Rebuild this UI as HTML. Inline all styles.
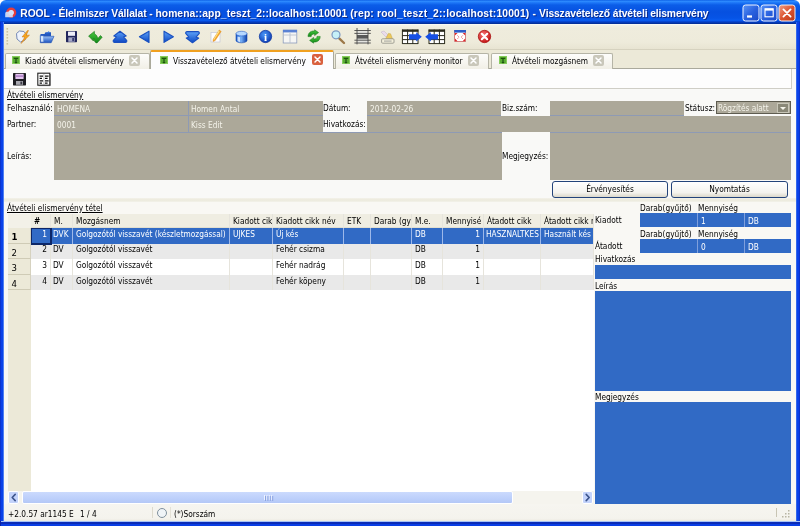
<!DOCTYPE html>
<html lang="hu"><head><meta charset="utf-8"><title>ROOL</title>
<style>
*{box-sizing:border-box;margin:0;padding:0}
html,body{width:800px;height:526px;overflow:hidden;background:#ece9d8}
body{position:relative;font-family:"DejaVu Sans Condensed","Liberation Sans",sans-serif;font-size:8.25px;color:#000;line-height:10px}
.a{position:absolute;white-space:nowrap}
.t{position:absolute;white-space:nowrap;height:10px;line-height:10px;filter:blur(0.3px)}
.g{position:absolute;background:#aca899}
.gt{color:#f4f3ea}
.b{position:absolute;background:#316ac5}
.w{color:#fff}
.u{text-decoration:underline}
#title{left:0;top:0;width:800px;height:23.5px;background:linear-gradient(180deg,#0a5ce4 0,#2f8dff 1.2px,#1e78f8 2.6px,#0b5de8 5px,#0650e0 12px,#0654e6 18px,#0a5cf0 20.4px,#0644d0 21.6px,#04309c 23.5px);border-radius:6px 6px 0 0}
#ttext{filter:blur(0.3px);left:20.3px;white-space:pre;top:7px;height:14px;line-height:14px;color:#fff;font-family:"Liberation Sans",sans-serif;font-weight:bold;font-size:10.3px;letter-spacing:0.01px;text-shadow:1px 1px 0 #0a2a8c}
.bl{position:absolute;background:#0a3edb}
#toolbar{left:3px;top:23.5px;width:794px;height:26px;background:linear-gradient(180deg,#fdfcf8 0,#f3f1e6 1.5px,#efecdd 4px,#eeebdb 18px,#e8e4d2 25px)}
.tab{position:absolute;top:53px;height:16px;background:linear-gradient(180deg,#fdfdfb,#f1efe6);border:1px solid #b5b4a6;border-bottom:none;border-radius:2px 2px 0 0}
.tab.on{top:50px;height:19px;background:#fcfcfe;border-color:#aaa99c;border-top:2px solid #f0a020}
.ti{position:absolute;width:8px;height:8px;background:#5cae34;border:1px solid #86cc5c}
.cx{position:absolute;width:11px;height:11px;background:#c9c7ba;border-radius:2px}
.cx.r{background:#d9613f}
.hd{position:absolute;top:215px;height:12px;background:#efede2;border-right:1px solid #d8d4c2}
.row{position:absolute;left:31px;width:563px;height:16px}
.vl{position:absolute;top:214px;width:1px;height:76px;background:#e6e4dc}
.rh{filter:blur(0.25px);position:absolute;left:8px;width:23px;height:15.5px;background:#ece9d8;border-bottom:1px solid #cfcbb6;border-right:1px solid #d6d2c0;font-size:9.5px;line-height:18px;padding-left:3.5px}
.btn{filter:blur(0.3px);position:absolute;top:181px;height:17px;border:1px solid #24447a;border-radius:3px;background:linear-gradient(180deg,#fff,#f4f3ee 70%,#dcd8ca);text-align:center;line-height:15px}
</style></head><body>
<!-- window frame -->
<div class="a" style="left:0;top:0;width:800px;height:8px;background:#fff"></div><div class="a" id="title"></div>
<div class="a" id="ttext"><span class="m" style="letter-spacing:-0.09px">ROOL - Élelmiszer Vállalat - </span><span class="m" style="letter-spacing:0.07px">homena::app_teszt_2::localhost:10001 </span><span class="m" style="letter-spacing:0.16px">(rep: rool_teszt_2::localhost:10001) - </span><span class="m" style="letter-spacing:-0.11px">Visszavételező átvételi elismervény</span></div>

<!-- title icon + window buttons -->
<svg class="a" style="left:0;top:0" width="800" height="24" viewBox="0 0 800 24">
<defs>
<linearGradient id="wb" x1="0" y1="0" x2="1" y2="1"><stop offset="0" stop-color="#5a94f6"/><stop offset=".5" stop-color="#2a62e0"/><stop offset="1" stop-color="#1a48c8"/></linearGradient>
<linearGradient id="wc" x1="0" y1="0" x2="1" y2="1"><stop offset="0" stop-color="#f0a088"/><stop offset=".5" stop-color="#dc5430"/><stop offset="1" stop-color="#b83818"/></linearGradient>
<filter id="sb2" x="-5%" y="-5%" width="110%" height="110%"><feGaussianBlur stdDeviation="0.35"/></filter>
</defs>
<g filter="url(#sb2)">
<circle cx="11.2" cy="12.6" r="3.9" fill="#e4ecfa" stroke="#e43c3c" stroke-width="2.4"/>
<path d="M5.2,13.4 q0,-1.6 1.6,-1.6 h2 q0.6,-1.6 2.2,-1.6 q1.8,0 1.8,2 v5 h-7.6z" fill="#cfe0fa" opacity=".92"/>
<rect x="743" y="5" width="16" height="16" rx="2.5" fill="url(#wb)" stroke="#f0f4ff" stroke-width="1"/>
<rect x="747" y="15.4" width="5" height="2.2" fill="#fff"/>
<rect x="761" y="5" width="16" height="16" rx="2.5" fill="url(#wb)" stroke="#f0f4ff" stroke-width="1"/>
<rect x="765" y="8.8" width="8.2" height="8" fill="none" stroke="#fff" stroke-width="1.1"/><rect x="765" y="8.6" width="8.2" height="2" fill="#fff"/>
<rect x="779" y="5" width="16" height="16" rx="2.5" fill="url(#wc)" stroke="#f8f0ec" stroke-width="1"/>
<path d="M783.4,9.4 L790.6,16.6 M790.6,9.4 L783.4,16.6" stroke="#fff" stroke-width="1.8" stroke-linecap="round"/>
</g>
</svg>
<div class="a" id="toolbar"></div>

<!-- toolbar icons -->
<svg class="a" style="left:0;top:0" width="800" height="70" viewBox="0 0 800 70">
<defs>
<linearGradient id="bg" x1="0" y1="0" x2="0" y2="1"><stop offset="0" stop-color="#5ea2f8"/><stop offset="1" stop-color="#0c48c4"/></linearGradient>
<linearGradient id="bh" x1="0" y1="0" x2="1" y2="0"><stop offset="0" stop-color="#1a58c8"/><stop offset=".45" stop-color="#7ab4fa"/><stop offset="1" stop-color="#0a3ea8"/></linearGradient>
<radialGradient id="bi" cx=".4" cy=".35" r=".7"><stop offset="0" stop-color="#4a98f8"/><stop offset="1" stop-color="#0a38b0"/></radialGradient>
<radialGradient id="rd" cx=".4" cy=".35" r=".7"><stop offset="0" stop-color="#f87878"/><stop offset="1" stop-color="#c00c0c"/></radialGradient>
<linearGradient id="gr" x1="0" y1="0" x2="0" y2="1"><stop offset="0" stop-color="#48c840"/><stop offset="1" stop-color="#148a18"/></linearGradient>
<linearGradient id="fl" x1="0" y1="0" x2="0" y2="1"><stop offset="0" stop-color="#a8ccfa"/><stop offset="1" stop-color="#1a52c0"/></linearGradient>
<filter id="sb" x="-5%" y="-5%" width="110%" height="110%"><feGaussianBlur stdDeviation="0.35"/></filter>
</defs>
<g filter="url(#sb)">
<!-- gripper -->
<g fill="#c9c3a4"><rect x="6.5" y="28" width="1.6" height="1.6"/><rect x="6.5" y="31" width="1.6" height="1.6"/><rect x="6.5" y="34" width="1.6" height="1.6"/><rect x="6.5" y="37" width="1.6" height="1.6"/><rect x="6.5" y="40" width="1.6" height="1.6"/><rect x="6.5" y="43" width="1.6" height="1.6"/></g>
<!-- 0 new -->
<path d="M16.5,33.5 L19.5,31 L24,31.5 L26.5,35 L25,40 L20.5,42 L17,39 Z" fill="#eef3fc" stroke="#7488b4" stroke-width="1"/>
<path d="M27.5,30.5 L22,37 L24.8,37 L21,43.5 L29.5,35.2 L26.2,35.2 L28.5,30.5Z" fill="#f7a51c" stroke="#c8741a" stroke-width=".5"/>
<!-- 1 open -->
<path d="M40.5,34 h4 l1,-1.8 h5.5 v3.8 h-10.5z" fill="#2458c0"/>
<path d="M46,33.5 l3,-2.5 l0.5,2 z" fill="#3a78e0"/>
<path d="M40.3,42.7 L40.3,35.5 L43,35.5 L44,36.3 L54,36.3 L51.2,42.7Z" fill="url(#fl)" stroke="#1c4cb0" stroke-width=".6"/>
<path d="M41,36.3 h2 l0.5,5.5 h-2.5z" fill="#e8f2ff" opacity=".85"/>
<!-- 2 save -->
<rect x="66" y="31" width="11" height="11.2" rx=".6" fill="#22265c"/>
<rect x="68" y="31.6" width="7" height="4.2" fill="#eeeef8"/>
<rect x="68.3" y="37.4" width="6.4" height="4.4" fill="#a6a8c6"/>
<rect x="72.3" y="38" width="1.6" height="3.2" fill="#2c3068"/>
<!-- 3 green arrow -->
<path d="M88.6,36 L94.4,31.4 L94.4,34 C96.6,34.6 97.4,36.8 97.8,38.6 L100.4,35.6 L102.2,37.2 L97,43 C94.6,42.8 94.2,40 93.8,38.4 L93.4,41 Z" fill="url(#gr)" stroke="#147018" stroke-width=".6" stroke-linejoin="round"/>
<!-- 4 double up -->
<g fill="url(#bg)" stroke="#1a50c0" stroke-width="1.1" stroke-linejoin="round">
<path d="M120,31.2 L126.2,36 L123.6,36.8 L126.8,40.6 Q127,42.4 125.4,42.4 L114.6,42.4 Q113,42.4 113.2,40.6 L116.4,36.8 L113.8,36 Z"/>
<!-- 5,6 -->
<path d="M139.4,36.8 L149,31.2 L149,42.4Z"/><path d="M173.4,36.8 L164,31.2 L164,42.4Z"/>
<!-- 7 double down -->
<path d="M192.5,42.8 L198.7,38 L196.1,37.2 L199.3,33.4 Q199.5,31.6 197.9,31.6 L187.1,31.6 Q185.5,31.6 185.7,33.4 L188.9,37.2 L186.3,38 Z"/>
</g>
<!-- 8 edit -->
<rect x="211" y="32.5" width="9" height="9.5" fill="#fdfdfd" stroke="#c4c6d8" stroke-width=".7"/>
<path d="M219.2,30 L221.2,31.4 L215.2,40.6 L213,41.6 L213.2,39.2Z" fill="#f6a62a" stroke="#d88418" stroke-width=".4"/>
<path d="M218.6,30.8 L219.6,31.4 L214.2,39.8 L213.4,39.4Z" fill="#fde48a"/>
<!-- 9 db -->
<path d="M236,33.6 v6.8 a5.5,2.4 0 0 0 11,0 v-6.8z" fill="url(#bh)" stroke="#1448b0" stroke-width=".6"/>
<ellipse cx="241.5" cy="33.6" rx="5.5" ry="2.3" fill="#b6d8ff" stroke="#2a62c8" stroke-width=".6"/>
<path d="M237.5,36.5 v4.5 q1.5,1 2.5,1 v-4.8z" fill="#e8f4ff" opacity=".8"/>
<!-- 10 info -->
<circle cx="265.5" cy="36.5" r="6.2" fill="url(#bi)" stroke="#0c349c" stroke-width=".7"/>
<text x="265.5" y="40.6" font-family="Liberation Serif,serif" font-weight="bold" font-size="11" fill="#fff" text-anchor="middle">i</text>
<!-- 11 window -->
<rect x="283.2" y="30.2" width="13.6" height="12.8" fill="#f6f6f4" stroke="#8c9cbc" stroke-width=".8"/>
<rect x="283" y="29.8" width="14" height="2.6" fill="#5a82d4"/>
<path d="M290,33 V43 M283.5,35 H296.5" stroke="#b4bccc" stroke-width=".8" fill="none"/>
<!-- 12 refresh -->
<g fill="url(#gr)" stroke="#147018" stroke-width=".5" stroke-linejoin="round">
<path d="M308,36.6 C308,32.8 311,30.6 314.6,31 L314.6,29.8 L318.6,32.6 L314.6,35.6 L314.6,34 C312.6,33.8 311.2,34.8 311.2,36.6Z"/>
<path d="M320.2,36.4 C320.2,40.2 317.2,42.4 313.6,42 L313.6,43.2 L309.6,40.4 L313.6,37.4 L313.6,39 C315.6,39.2 317,38.2 317,36.4Z"/>
</g>
<!-- 13 search -->
<path d="M339.2,38.4 L344,43" stroke="#9c7848" stroke-width="2.4" stroke-linecap="round"/>
<circle cx="336" cy="34.8" r="4" fill="#c6f0f8" stroke="#7c98c0" stroke-width="1.2"/>
<!-- 14 bars -->
<rect x="357" y="30.5" width="11" height="12.5" fill="#e4e4e0"/>
<rect x="357" y="35" width="11" height="3.6" fill="#585858"/>
<path d="M357,28 V44.4 M368,28 V44.4 M354.4,30.5 H370.8 M354.4,33.4 H370.8 M354.4,40.2 H370.8 M354.4,43 H370.8" stroke="#484848" stroke-width=".9" fill="none"/>
<!-- 15 stamp -->
<path d="M381,32 L384,31 L388,35 L386,37Z" fill="#eadcec" stroke="#b8a8c0" stroke-width=".4"/>
<path d="M385.6,39 L388.4,33.4 L390.6,33.8 L392.6,39Z" fill="#ecc85a" stroke="#b89838" stroke-width=".4"/>
<rect x="381.6" y="38.8" width="12.4" height="4.4" rx="1" fill="#f4f0dc" stroke="#8c8c84" stroke-width=".8"/>
<rect x="384" y="40.4" width="7.6" height="1.4" fill="#b8b8b0"/>
<!-- 16 export -->
<rect x="402.4" y="30" width="15.6" height="13.6" fill="#fff"/>
<path d="M402.4,30.6 H418 M402.4,35.6 H418 M402.4,39.6 H418 M402.4,43.6 H418 M402.4,29.6 V44 M407.6,29.6 V44 M412.8,29.6 V44 M418,29.6 V44" stroke="#2a2a1c" stroke-width="1" fill="none"/>
<rect x="402" y="29.4" width="16.4" height="2.4" fill="#2a2a1c"/>
<path d="M409,34.2 H416.2 V32.2 L421.8,36.8 L416.2,41.4 V39.4 H409Z" fill="#1650e4"/>
<!-- 17 import -->
<rect x="429" y="30" width="15.6" height="13.6" fill="#fff"/>
<path d="M429,30.6 H444.6 M429,35.6 H444.6 M429,39.6 H444.6 M429,43.6 H444.6 M429,29.6 V44 M434.2,29.6 V44 M439.4,29.6 V44 M444.6,29.6 V44" stroke="#2a2a1c" stroke-width="1" fill="none"/>
<rect x="428.6" y="29.4" width="16.4" height="2.4" fill="#2a2a1c"/>
<path d="M438,34.2 H430.8 V32.2 L425.2,36.8 L430.8,41.4 V39.4 H438Z" fill="#1650e4"/>
<!-- 18 fullscreen -->
<rect x="454.6" y="30.4" width="11" height="11.2" fill="#fff" stroke="#c86868" stroke-width=".8"/>
<rect x="454.2" y="30" width="11.8" height="2.6" fill="#2c5cc8"/>
<path d="M455,33 h2.6 l-2.6,2.6z M465.2,33 h-2.6 l2.6,2.6z M455,41.2 h2.6 l-2.6,-2.6z M465.2,41.2 h-2.6 l2.6,-2.6z" fill="#e02828"/><path d="M457.4,35.4 l1.4,1.4 M462.8,35.4 l-1.4,1.4 M457.4,38.8 l1.4,-1.4 M462.8,38.8 l-1.4,-1.4" stroke="#e86060" stroke-width=".8"/>
<!-- 19 close -->
<circle cx="484.5" cy="36.5" r="6.2" fill="url(#rd)" stroke="#a40808" stroke-width=".7"/>
<path d="M481.8,33.8 L487.2,39.2 M487.2,33.8 L481.8,39.2" stroke="#fff" stroke-width="2.1" stroke-linecap="round"/>
</g>
</svg>
<!-- tabs -->
<div class="a" style="left:3px;top:49px;width:794px;height:1px;background:#d6d2bf"></div>
<div class="a" style="left:3px;top:50px;width:794px;height:19px;background:#ece9d8"></div>
<div class="a" style="left:3px;top:68px;width:793px;height:1px;background:#aaa99c"></div>
<div class="tab" style="left:5px;width:145px"></div>
<div class="tab on" style="left:150px;width:184px"></div>
<div class="tab" style="left:335px;width:154px"></div>
<div class="tab" style="left:491px;width:122px"></div>
<!-- content panel -->
<div class="a" style="left:3px;top:69px;width:793px;height:129px;background:#f9f9f7"></div>
<div class="a" style="left:3px;top:69px;width:789px;height:20px;background:#fdfdfd;border-right:1px solid #cfcec6;border-bottom:1px solid #cfcec6"></div>
<div class="a" style="left:3px;top:198px;width:793px;height:4px;background:linear-gradient(180deg,#f3f2ea,#eceadc 50%,#f3f2ea)"></div>
<div class="a" style="left:3px;top:202px;width:793px;height:302px;background:#f9f8f4"></div>
<div class="a" style="left:3px;top:504px;width:793px;height:18px;background:linear-gradient(180deg,#f6f5f0 0,#f4f3ed 80%,#e9e7dc 100%)"></div>
<div class="a" style="left:796px;top:50px;width:1px;height:472px;background:#b9c4e0"></div>

<!-- tab labels -->
<div class="ti" style="left:12px;top:56px"></div><div class="t" style="left:25px;top:56px">Kiadó átvételi elismervény</div><div class="cx" style="left:129px;top:55px"></div>
<div class="ti" style="left:160px;top:56px"></div><div class="t" style="left:173px;top:56px">Visszavételező átvételi elismervény</div><div class="cx r" style="left:312px;top:54px"></div>
<div class="ti" style="left:342px;top:56px"></div><div class="t" style="left:355px;top:56px">Átvételi elismervény monitor</div><div class="cx" style="left:468px;top:55px"></div>
<div class="ti" style="left:499px;top:56px"></div><div class="t" style="left:512px;top:56px">Átvételi mozgásnem</div><div class="cx" style="left:593px;top:55px"></div>

<svg class="a" style="left:0;top:50px" width="800" height="40" viewBox="0 50 800 40">
<g filter="url(#sb)">
<g stroke="#fff" stroke-width="1.5" stroke-linecap="round">
<path d="M132,58 L137,63 M137,58 L132,63"/>
<path d="M315,57 L320,62 M320,57 L315,62"/>
<path d="M471,58 L476,63 M476,58 L471,63"/>
<path d="M596,58 L601,63 M601,58 L596,63"/>
</g>
<g stroke="#1a5410" stroke-width="1.3" fill="none">
<path d="M13.8,58.4 H18.2 M16,58.4 V62.4 M14.8,62.6 H17.2"/>
<path d="M161.8,58.4 H166.2 M164,58.4 V62.4 M162.8,62.6 H165.2"/>
<path d="M343.8,58.4 H348.2 M346,58.4 V62.4 M344.8,62.6 H347.2"/>
<path d="M500.8,58.4 H505.2 M503,58.4 V62.4 M501.8,62.6 H504.2"/>
</g>
<!-- small toolbar: save -->
<rect x="13" y="73" width="13" height="12.4" rx=".6" fill="#1e1e22"/>
<rect x="15.4" y="73.8" width="8.2" height="5.2" fill="#e4c4f0"/>
<rect x="15.4" y="75.4" width="8.2" height="1.4" fill="#a878c0"/>
<rect x="16" y="81" width="7" height="3.8" fill="#a8a8b0"/>
<rect x="20.4" y="81.6" width="1.8" height="2.8" fill="#3a3a44"/>
<!-- small toolbar: list -->
<rect x="37.8" y="73.2" width="12" height="12" fill="#fff" stroke="#222" stroke-width="1.1"/>
<path d="M50.2,74 V85.6 H38.6" stroke="#444" stroke-width=".8" fill="none"/>
<path d="M39.6,76 h3.4 M39.6,78.4 h2.4 M39.6,80.8 h3.4 M39.6,83 h2.4 M45,76 h3.6 M45,78.4 h2.6 M45,80.8 h3.6 M45,83 h2.6" stroke="#111" stroke-width="1.25" fill="none"/>
<path d="M43.9,74 V85" stroke="#888" stroke-width=".6"/>
</g>
</svg>
<!-- form -->
<div class="t u" style="left:7px;top:90px">Átvételi elismervény</div>
<div class="t" style="left:7px;top:103px">Felhasználó:</div>
<div class="t" style="left:7px;top:119px">Partner:</div>
<div class="t" style="left:7px;top:151px">Leírás:</div>
<div class="t" style="left:323px;top:103px">Dátum:</div>
<div class="t" style="left:323px;top:119px">Hivatkozás:</div>
<div class="t" style="left:502px;top:103px">Biz.szám:</div>
<div class="t" style="left:502px;top:151px">Megjegyzés:</div>
<div class="t" style="left:685px;top:103px">Státusz:</div>
<div class="g" style="left:54px;top:101px;width:269px;height:31px"></div>
<div class="g" style="left:367px;top:101px;width:134px;height:15px"></div>
<div class="g" style="left:550px;top:101px;width:134px;height:15px"></div>
<div class="g" style="left:367px;top:116px;width:424px;height:16px"></div>
<div class="g" style="left:54px;top:132px;width:448px;height:47.5px"></div>
<div class="g" style="left:550px;top:132px;width:241px;height:47.5px"></div>
<div class="a" style="left:54px;top:115px;width:269px;height:1px;background:#8e9ab4"></div>
<div class="a" style="left:54px;top:132px;width:448px;height:1px;background:#8e9ab4"></div>
<div class="a" style="left:367px;top:115px;width:134px;height:1px;background:#8e9ab4"></div>
<div class="a" style="left:550px;top:115px;width:134px;height:1px;background:#8e9ab4"></div>
<div class="a" style="left:550px;top:132px;width:241px;height:1px;background:#8e9ab4"></div>
<div class="a" style="left:188px;top:101px;width:1px;height:31px;background:#8e9ab4"></div>
<div class="t gt" style="left:57px;top:104px">HOMENA</div>
<div class="t gt" style="left:57px;top:120px">0001</div>
<div class="t gt" style="left:191px;top:104px">Homen Antal</div>
<div class="t gt" style="left:191px;top:120px">Kiss Edit</div>
<div class="t gt" style="left:370px;top:104px">2012-02-26</div>
<div class="a" style="left:716px;top:101px;width:74.5px;height:13px;background:#aca899;border:1px solid #5e5c50"></div>
<div class="t gt" style="left:718px;top:103px">Rögzítés alatt</div>
<div class="a" style="left:777px;top:103px;width:12px;height:10px;background:#8a8878;border:1px solid #c8c6b8"></div>
<div class="a" style="left:780px;top:106.5px;width:0;height:0;border-left:3px solid transparent;border-right:3px solid transparent;border-top:3px solid #f4f3ea"></div>
<div class="btn" style="left:552px;width:116px">Érvényesítés</div>
<div class="btn" style="left:671px;width:117px">Nyomtatás</div>

<!-- table -->
<div class="t u" style="left:7px;top:203px">Átvételi elismervény tétel</div>
<div class="a" style="left:8px;top:214px;width:586px;height:277px;background:#fff"></div>
<div class="a" style="left:8px;top:214px;width:23px;height:277px;background:#ece9d8"></div>
<div class="a" style="left:8px;top:214px;width:23px;height:14px;background:#f3f1e8"></div>
<div class="a" style="left:31px;top:214px;width:563px;height:14px;background:#efede2;border-bottom:1px solid #e2dfd0"></div>
<div class="row" style="top:228px;height:16px;background:#316ac5"></div>
<div class="row" style="top:244px;height:15px;background:#e9e9e9"></div>
<div class="row" style="top:274.5px;height:15.5px;background:#e9e9e9"></div>
<div class="t" style="left:34px;top:216px;font-weight:bold">#</div><div class="vl" style="left:50px"></div>
<div class="t" style="left:54px;top:216px;width:18px;overflow:hidden">M.</div><div class="vl" style="left:72px"></div>
<div class="t" style="left:76px;top:216px;width:153px;overflow:hidden">Mozgásnem</div><div class="vl" style="left:229px"></div>
<div class="t" style="left:233px;top:216px;width:39px;overflow:hidden">Kiadott cik</div><div class="vl" style="left:272px"></div>
<div class="t" style="left:276px;top:216px;width:67px;overflow:hidden">Kiadott cikk név</div><div class="vl" style="left:343px"></div>
<div class="t" style="left:347px;top:216px;width:23px;overflow:hidden">ETK</div><div class="vl" style="left:370px"></div>
<div class="t" style="left:374px;top:216px;width:37px;overflow:hidden">Darab (gy</div><div class="vl" style="left:411px"></div>
<div class="t" style="left:415px;top:216px;width:27px;overflow:hidden">M.e.</div><div class="vl" style="left:442px"></div>
<div class="t" style="left:446px;top:216px;width:37px;overflow:hidden">Mennyisé</div><div class="vl" style="left:483px"></div>
<div class="t" style="left:487px;top:216px;width:53px;overflow:hidden">Átadott cikk</div><div class="vl" style="left:540px"></div>
<div class="t" style="left:544px;top:216px;width:49px;overflow:hidden">Átadott cikk n</div><div class="vl" style="left:593px"></div>
<div class="rh" style="top:228px;font-weight:bold">1</div><div class="t w" style="left:31px;top:229px;width:16px;text-align:right">1</div><div class="t w" style="left:53px;top:229px">DVK</div><div class="t w" style="left:76px;top:229px">Golgozótól visszavét (készletmozgással)</div><div class="t w" style="left:233px;top:229px">UJKES</div><div class="t w" style="left:276px;top:229px">Új kés</div><div class="t w" style="left:415px;top:229px">DB</div><div class="t w" style="left:443px;top:229px;width:37px;text-align:right">1</div><div class="t w" style="left:486px;top:229px">HASZNALTKES</div><div class="t w" style="left:544px;top:229px">Használt kés</div>
<div class="rh" style="top:243.5px">2</div><div class="t" style="left:31px;top:244px;width:16px;text-align:right">2</div><div class="t" style="left:53px;top:244px">DV</div><div class="t" style="left:76px;top:244px">Golgozótól visszavét</div><div class="t" style="left:276px;top:244px">Fehér csizma</div><div class="t" style="left:415px;top:244px">DB</div><div class="t" style="left:443px;top:244px;width:37px;text-align:right">1</div>
<div class="rh" style="top:259px">3</div><div class="t" style="left:31px;top:260px;width:16px;text-align:right">3</div><div class="t" style="left:53px;top:260px">DV</div><div class="t" style="left:76px;top:260px">Golgozótól visszavét</div><div class="t" style="left:276px;top:260px">Fehér nadrág</div><div class="t" style="left:415px;top:260px">DB</div><div class="t" style="left:443px;top:260px;width:37px;text-align:right">1</div>
<div class="rh" style="top:274.5px">4</div><div class="t" style="left:31px;top:276px;width:16px;text-align:right">4</div><div class="t" style="left:53px;top:276px">DV</div><div class="t" style="left:76px;top:276px">Golgozótól visszavét</div><div class="t" style="left:276px;top:276px">Fehér köpeny</div><div class="t" style="left:415px;top:276px">DB</div><div class="t" style="left:443px;top:276px;width:37px;text-align:right">1</div>
<div class="a" style="left:72px;top:228px;width:1px;height:16px;background:#9db8ea"></div><div class="a" style="left:229px;top:228px;width:1px;height:16px;background:#9db8ea"></div><div class="a" style="left:272px;top:228px;width:1px;height:16px;background:#9db8ea"></div><div class="a" style="left:343px;top:228px;width:1px;height:16px;background:#9db8ea"></div><div class="a" style="left:370px;top:228px;width:1px;height:16px;background:#9db8ea"></div><div class="a" style="left:411px;top:228px;width:1px;height:16px;background:#9db8ea"></div><div class="a" style="left:442px;top:228px;width:1px;height:16px;background:#9db8ea"></div><div class="a" style="left:483px;top:228px;width:1px;height:16px;background:#9db8ea"></div><div class="a" style="left:540px;top:228px;width:1px;height:16px;background:#9db8ea"></div>
<div class="a" style="left:31px;top:228px;width:21px;height:17px;border:1px solid #0c2668;border-right-width:2px;border-bottom-width:2px"></div>
<div class="a" style="left:8px;top:491px;width:586px;height:13px;background:#f5f4ee"></div>
<div class="a" style="left:8px;top:491px;width:11px;height:13px;background:#c3d3fb;border:1px solid #fff;border-radius:2px"></div>
<div class="a" style="left:582px;top:491px;width:11px;height:13px;background:#c3d3fb;border:1px solid #fff;border-radius:2px"></div>
<div class="a" style="left:22px;top:491px;width:491px;height:13px;background:linear-gradient(180deg,#cbdafd,#bccffb 60%,#b4c8f6);border:1px solid #fff;border-radius:2px"></div>

<!-- right panel -->
<div class="t" style="left:640px;top:203px">Darab(gyűjtő)</div><div class="t" style="left:698px;top:203px">Mennyiség</div>
<div class="t" style="left:595px;top:215px">Kiadott</div>
<div class="b" style="left:640px;top:213px;width:151px;height:14px"></div>
<div class="t w" style="left:701px;top:216px">1</div><div class="t w" style="left:748px;top:216px">DB</div>
<div class="t" style="left:640px;top:229px">Darab(gyűjtő)</div><div class="t" style="left:698px;top:229px">Mennyiség</div>
<div class="t" style="left:595px;top:241px">Átadott</div>
<div class="b" style="left:640px;top:239px;width:151px;height:14px"></div>
<div class="t w" style="left:701px;top:242px">0</div><div class="t w" style="left:748px;top:242px">DB</div>
<div class="a" style="left:697px;top:213px;width:1px;height:14px;background:#7f9fdc"></div><div class="a" style="left:744px;top:213px;width:1px;height:14px;background:#7f9fdc"></div>
<div class="a" style="left:697px;top:239px;width:1px;height:14px;background:#7f9fdc"></div><div class="a" style="left:744px;top:239px;width:1px;height:14px;background:#7f9fdc"></div>
<div class="t" style="left:595px;top:254px">Hivatkozás</div>
<div class="b" style="left:595px;top:264.5px;width:196px;height:14.5px"></div>
<div class="t" style="left:595px;top:281px">Leírás</div>
<div class="b" style="left:595px;top:290.5px;width:196px;height:100.8px"></div>
<div class="t" style="left:595px;top:392px">Megjegyzés</div>
<div class="b" style="left:595px;top:402px;width:196px;height:102px"></div>

<!-- status -->
<div class="t" style="left:8px;top:509px">+2.0.57 ar1145 E</div><div class="t" style="left:80px;top:509px">1 / 4</div>
<div class="a" style="left:152px;top:507px;width:1px;height:11px;background:#dddacd"></div><div class="a" style="left:169.5px;top:507px;width:1px;height:11px;background:#e4e1d6"></div><div class="a" style="left:157px;top:507.5px;width:10px;height:10px;border:1px solid #7f8f9c;border-radius:50%;background:#eff4f7;filter:blur(0.3px)"></div>
<div class="t" style="left:174px;top:509px">(*)Sorszám</div>

<svg class="a" style="left:0;top:488px" width="800" height="38" viewBox="0 488 800 38">
<g filter="url(#sb)">
<path d="M15.2,494.4 L12.2,497.5 L15.2,500.6" stroke="#3c548c" stroke-width="1.6" fill="none" stroke-linecap="round" stroke-linejoin="round"/>
<path d="M586.2,494.4 L589.2,497.5 L586.2,500.6" stroke="#3c548c" stroke-width="1.6" fill="none" stroke-linecap="round" stroke-linejoin="round"/>
<path d="M776.5,508 V517" stroke="#c8c5b4" stroke-width="1"/>
<g fill="#b8b5a4"><rect x="788" y="510" width="1.5" height="1.5"/><rect x="788" y="513" width="1.5" height="1.5"/><rect x="788" y="516" width="1.5" height="1.5"/><rect x="785" y="513" width="1.5" height="1.5"/><rect x="785" y="516" width="1.5" height="1.5"/><rect x="782" y="516" width="1.5" height="1.5"/></g>
<g fill="#eef3ff"><rect x="264" y="495" width="1" height="5"/><rect x="266.4" y="495" width="1" height="5"/><rect x="268.8" y="495" width="1" height="5"/><rect x="271.2" y="495" width="1" height="5"/></g><g fill="#8ca4e0"><rect x="265" y="496" width="1" height="5"/><rect x="267.4" y="496" width="1" height="5"/><rect x="269.8" y="496" width="1" height="5"/><rect x="272.2" y="496" width="1" height="5"/></g>
</g>
</svg>
<!-- window borders -->
<div class="a" style="left:0;top:22px;width:3.6px;height:504px;background:linear-gradient(90deg,#0a22a8 0,#0a3ee6 0.8px,#0a44ea 2.8px,#5a88f2 3.6px)"></div>
<div class="a" style="left:796.4px;top:22px;width:3.6px;height:504px;background:linear-gradient(270deg,#0a22a8 0,#0a3ee6 0.8px,#0a44ea 2.8px,#3a6cec 3.6px)"></div>
<div class="a" style="left:0;top:521.4px;width:800px;height:4.6px;background:linear-gradient(180deg,#a6c2f8 0,#a6c2f8 0.9px,#0a2cb8 1.3px,#0a2cb8 2.5px,#0a3ee4 3.1px,#0a3ee4 4.6px)"></div>
<div class="a" style="left:0;top:521.4px;width:1px;height:4.6px;background:#0a22a8"></div>
</body></html>
